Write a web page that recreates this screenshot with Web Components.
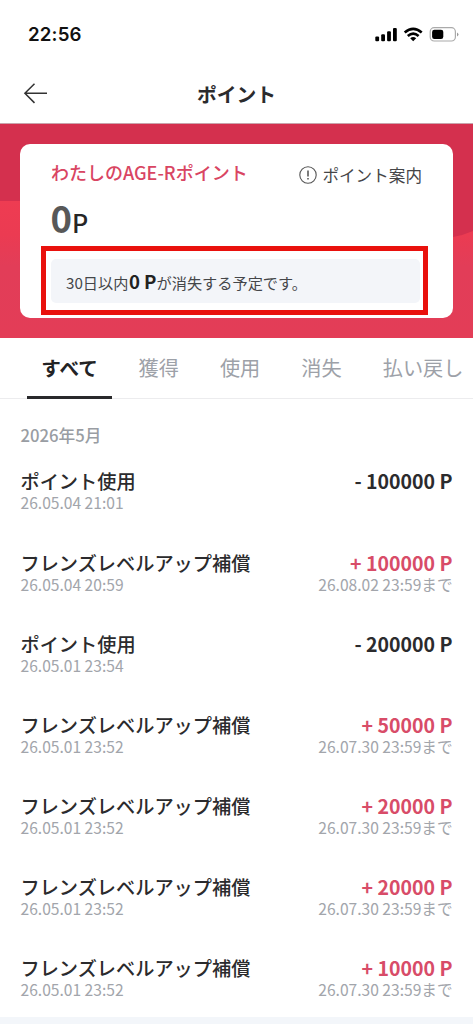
<!DOCTYPE html>
<html lang="ja">
<head>
<meta charset="utf-8">
<title>ポイント</title>
<style>
html,body{margin:0;background:#fff}
body{font-family:"Noto Sans CJK JP","Noto Sans",sans-serif;color:#2b2b2d;width:473px;height:1024px;overflow:hidden}
</style>
</head>
<body>
<point-app></point-app>
<script>
const define = (name, html) => customElements.define(name, class extends HTMLElement {
  constructor() {
    super();
    const t = document.createElement('template');
    t.innerHTML = html;
    this.attachShadow({mode: 'open'}).append(t.content.cloneNode(true));
  }
});

define('status-bar', `
<style>
:host{display:flex;height:68px;box-sizing:border-box;padding:0 14px 0 28px;justify-content:space-between;align-items:center;color:#111}
time{font:600 18.7px/24px Inter,sans-serif;letter-spacing:.15px;padding-top:2px}
svg{display:block}
</style>
<time>22:56</time>
<svg width="86" height="20" viewBox="373 24 86 20">
  <g fill="#000"><rect x="375.3" y="36.5" width="3.8" height="4.8" rx="1.1"/><rect x="381.2" y="34.2" width="3.8" height="7.1" rx="1.1"/><rect x="387.1" y="31.2" width="3.8" height="10.1" rx="1.1"/><rect x="393" y="28" width="3.8" height="13.3" rx="1.1"/>
  <path d="M413.2 41.3 410.2 38.3Q413.2 35.8 416.2 38.3Z"/></g>
  <g fill="none" stroke="#000" stroke-width="2.6"><path d="M404.7 32.6Q413.2 25.2 421.7 32.6"/><path d="M407.8 36Q413.2 31.2 418.6 36"/></g>
  <rect x="430.2" y="27.7" width="25.2" height="13.3" rx="4" fill="#fff" stroke="#aaa" stroke-width="1.2"/>
  <rect x="432.1" y="29.7" width="11.2" height="9.4" rx="2.3" fill="#000"/>
  <path d="M457 32.4Q460 34.4 457 36.4Z" fill="#999"/>
</svg>`);

define('page-header', `
<style>
:host{display:grid;grid-template-columns:1fr auto 1fr;align-items:center;height:56px;padding:0 22px;box-sizing:border-box;border-bottom:1px solid #c9a3ab}
h1{margin:0 0 4px;font-size:19.8px;line-height:28px;font-weight:700}
svg{display:block;margin-bottom:5px}
</style>
<svg width="28" height="24" viewBox="22 81 28 24" fill="none" stroke="#333" stroke-width="1.5"><path d="M47 93.3H25M34.5 83.7 24.9 93.3 34.5 102.9"/></svg>
<h1><slot></slot></h1><span></span>`);

define('info-link', `
<style>
:host{display:flex;align-items:center;gap:5px;font-size:16.6px;line-height:24px;color:#454547}
svg{display:block}
</style>
<svg width="18" height="18" viewBox="0 0 18 18"><circle cx="9" cy="9" r="8.2" fill="none" stroke="#555" stroke-width="1.1"/><path d="M9 4.6V10.5M9 12V13.6" stroke="#444" stroke-width="1.4"/></svg>
<slot></slot>`);

define('expiry-notice', `
<style>
:host{display:block;box-sizing:border-box;border:5px solid #e9110d;width:387px;height:69px;padding:8px 3px 7px 5px}
p{margin:0;height:44px;line-height:47px;background:#f3f5f9;border-radius:5px;padding-left:15px;font-size:15.2px;color:#444649;white-space:nowrap}
p ::slotted(b){color:#222;font-size:18.6px;line-height:1;margin-left:.5px}
</style><p><slot></slot></p>`);

define('point-banner', `
<style>
:host{display:grid;height:214px;overflow:hidden}
svg,.wrap{grid-area:1/1}
.wrap{z-index:1;padding:20px 20px}
.card{box-sizing:border-box;width:433px;height:174px;border-radius:10px;background:#fff;padding:15px 25px 0 21px}
.top{display:flex;justify-content:space-between;padding:0 6px 0 10px;height:39px}
h2{margin:0;font-size:18px;line-height:26px;font-weight:500;color:#d94562;white-space:nowrap}
info-link{height:24px;margin-top:4px}
.bal{display:flex;align-items:baseline;height:48px;padding-left:9.5px;line-height:40px}
.bal b{font-size:36.5px;color:#585858}
.bal span{font-size:25px;font-weight:500;color:#262626}
</style>
<svg width="473" height="214" viewBox="0 124 473 214">
<defs><linearGradient id="g" x1="0" y1="200" x2="0" y2="338" gradientUnits="userSpaceOnUse"><stop offset="0" stop-color="#ee3c52"/><stop offset=".25" stop-color="#eb3b52"/><stop offset=".48" stop-color="#e23d58"/><stop offset="1" stop-color="#e33d57"/></linearGradient></defs>
<path d="M0 124H473V338H0Z" fill="url(#g)"/><path d="M0 124H473V231Q464 235 453 237Q240 270 20 201H0Z" fill="#d4304e"/></svg>
<div class="wrap"><div class="card">
<div class="top"><h2>わたしのAGE-Rポイント</h2><info-link>ポイント案内</info-link></div>
<div class="bal"><b>0</b><span>P</span></div>
<expiry-notice>30日以内<b>0 P</b>が消失する予定です。</expiry-notice>
</div></div>`);

define('tab-item', `
<style>
:host{display:block;box-sizing:border-box;height:61px;line-height:60px;padding:0 20.5px;font-size:20.2px;color:#9da1a8;white-space:nowrap}
:host([active]){color:#232325;font-weight:700;font-size:19.6px;border-bottom:3px solid #29292b;padding:0 14.6px 0 14.6px;margin-right:5.6px}
</style><slot></slot>`);

define('tab-bar', `
<style>
:host{display:flex;box-sizing:border-box;height:61px;padding-left:26.6px;overflow:hidden;box-shadow:inset 0 -1px #ececee}
</style><slot></slot>`);

define('history-row', `
<style>
:host{display:grid;grid-template-columns:1fr auto;grid-template-rows:25px 20px;height:81.1px;box-sizing:border-box;white-space:nowrap}
:host(:first-of-type){height:81.5px}
.t{font-size:19.2px;line-height:25px;font-weight:500}
.a{font-size:19.5px;line-height:25px;font-weight:700;text-align:right}
.t,.a{align-self:baseline}
.d,.e{font-size:15.6px;line-height:19px;color:#a2a5ab}
.e{text-align:right}
:host([gain]) .a{color:#d84c68}
</style>
<span class="t"><slot></slot></span><span class="a"><slot name="amount"></slot></span><span class="d"><slot name="date"></slot></span><span class="e"><slot name="until"></slot></span>`);

define('history-list', `
<style>
:host{display:block;height:618px;box-sizing:border-box;padding:24px 20.5px 0;overflow:hidden}
h3{margin:0 0 21.2px;font-size:16.7px;line-height:24px;font-weight:500;color:#999da3}
</style><h3>2026年5月</h3><slot></slot>`);

define('page-footer', `<style>:host{display:block;height:7px;background:#f3f6fa}</style>`);

const rows = [
  ['ポイント使用', '26.05.04 21:01', '- 100000 P', ''],
  ['フレンズレベルアップ補償', '26.05.04 20:59', '+ 100000 P', '26.08.02 23:59まで'],
  ['ポイント使用', '26.05.01 23:54', '- 200000 P', ''],
  ['フレンズレベルアップ補償', '26.05.01 23:52', '+ 50000 P', '26.07.30 23:59まで'],
  ['フレンズレベルアップ補償', '26.05.01 23:52', '+ 20000 P', '26.07.30 23:59まで'],
  ['フレンズレベルアップ補償', '26.05.01 23:52', '+ 20000 P', '26.07.30 23:59まで'],
  ['フレンズレベルアップ補償', '26.05.01 23:52', '+ 10000 P', '26.07.30 23:59まで']
].map(([t, d, a, u]) => `<history-row${a[0] === '+' ? ' gain' : ''}>${t}<span slot="date">${d}</span><span slot="amount">${a}</span><span slot="until">${u}</span></history-row>`).join('');

define('point-app', `
<style>:host{display:block;width:473px;height:1024px;overflow:hidden;background:#fff}</style>
<status-bar></status-bar>
<page-header>ポイント</page-header>
<point-banner></point-banner>
<tab-bar><tab-item active>すべて</tab-item><tab-item>獲得</tab-item><tab-item>使用</tab-item><tab-item>消失</tab-item><tab-item>払い戻し</tab-item></tab-bar>
<history-list>${rows}</history-list>
<page-footer></page-footer>`);
</script>
</body>
</html>
